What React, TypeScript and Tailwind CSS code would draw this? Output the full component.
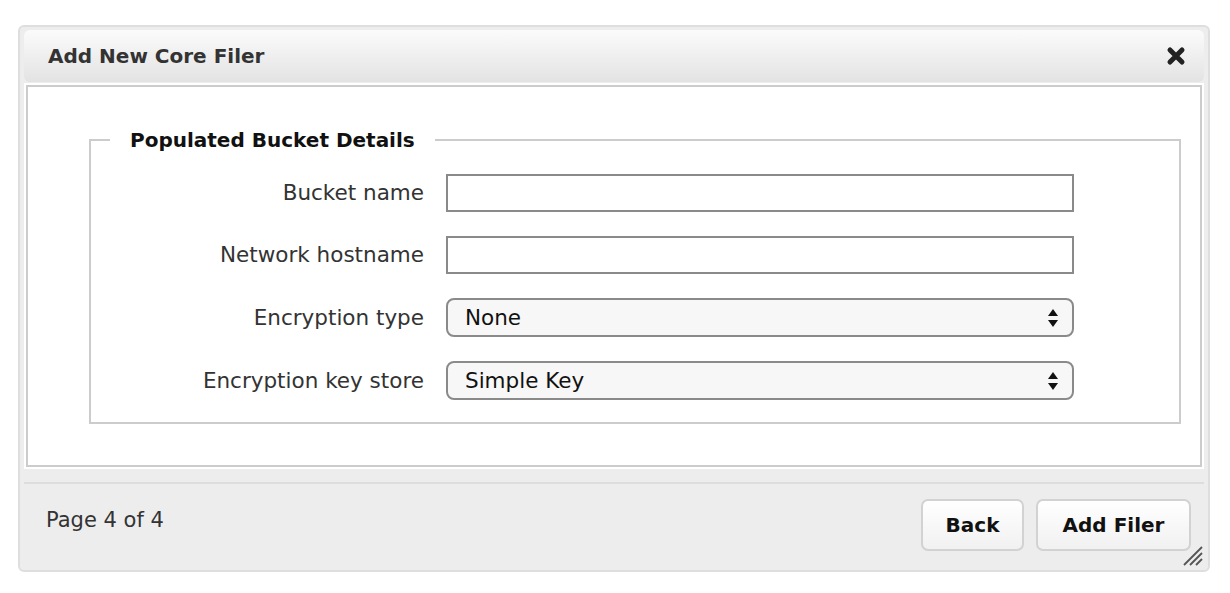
import React from "react";

const font = "font-['DejaVu_Sans',sans-serif]";

function Arrows() {
    return (
        <svg width="12" height="22" viewBox="0 0 12 22" className="shrink-0">
            <path d="M6 2 L11 9 L1 9 Z" fill="#111" />
            <path d="M6 20 L11 13 L1 13 Z" fill="#111" />
        </svg>
    );
}

function Row({ label, children }: { label: string; children: React.ReactNode }) {
    return (
        <div className="flex items-center">
            <div className="w-[333px] text-right text-[21.5px] text-[#333] leading-none">{label}</div>
            <div className="ml-[22px]">{children}</div>
        </div>
    );
}

function TextInput() {
    return <input className="w-[628px] h-[38px] border-2 border-[#8a8a8a] bg-white outline-none px-2" />;
}

function Select({ value }: { value: string }) {
    return (
        <div className="w-[628px] h-[39px] border-2 border-[#8a8a8a] rounded-[8px] bg-[#f7f7f7] flex items-center justify-between pl-[17px] pr-[13px]">
            <span className="text-[21.5px] text-[#111] leading-none">{value}</span>
            <Arrows />
        </div>
    );
}

export default function App() {
    return (
        <div className={`min-h-screen bg-white pt-[25px] pl-[18px] ${font}`}>
            <div className="relative w-[1192px] h-[547px] rounded-[6px] border-2 border-[#dedede] bg-[#ededed] px-[4px] pt-[3px] flex flex-col">
                {/* Header */}
                <div className="h-[52px] shrink-0 rounded-[6px] bg-gradient-to-b from-[#fbfbfb] to-[#e3e3e3] flex items-center justify-between pl-[24px] pr-[18px]">
                    <div className="text-[20px] font-bold text-[#333]">Add New Core Filer</div>
                    <svg width="20" height="20" viewBox="0 0 20 20">
                        <path d="M4 4 L16 16 M16 4 L4 16" stroke="#222" strokeWidth="5" strokeLinecap="round" />
                    </svg>
                </div>

                {/* Content */}
                <div className="mt-[1px] h-[386px] bg-white p-[2px]">
                    <div className="h-full border-2 border-[#cccccc] pt-[41px] pl-[61px] pr-[19px]">
                        <fieldset className="border-2 border-[#cccccc] pb-[22px]">
                            <legend className="ml-[19px] px-[20px] text-[20px] font-bold text-[#111] leading-[24px]">
                                Populated Bucket Details
                            </legend>
                            <div className="pt-[22px] flex flex-col gap-[24px]">
                                <Row label="Bucket name"><TextInput /></Row>
                                <Row label="Network hostname"><TextInput /></Row>
                                <Row label="Encryption type"><Select value="None" /></Row>
                                <Row label="Encryption key store"><Select value="Simple Key" /></Row>
                            </div>
                        </fieldset>
                    </div>
                </div>

                {/* Footer */}
                <div className="mt-[13px] border-t-2 border-[#dddddd] flex items-start justify-between pl-[22px] pr-[13px] pt-[15px]">
                    <div className="text-[21px] text-[#333] mt-[6px]">Page 4 of 4</div>
                    <div className="flex gap-[12px]">
                        <button className="w-[103px] h-[52px] rounded-[7px] border-2 border-[#d2d2d2] bg-gradient-to-b from-white to-[#f1f1f1] text-[20px] font-bold text-[#111]">
                            Back
                        </button>
                        <button className="w-[155px] h-[52px] rounded-[7px] border-2 border-[#d2d2d2] bg-gradient-to-b from-white to-[#f1f1f1] text-[20px] font-bold text-[#111]">
                            Add Filer
                        </button>
                    </div>
                </div>

                {/* Resize grip */}
                <svg className="absolute right-[5px] bottom-[4px]" width="22" height="22" viewBox="0 0 22 22">
                    <path d="M21 3 L3 21 M21 9 L9 21 M21 15 L15 21" stroke="#555" strokeWidth="1.8" />
                </svg>
            </div>
        </div>
    );
}
